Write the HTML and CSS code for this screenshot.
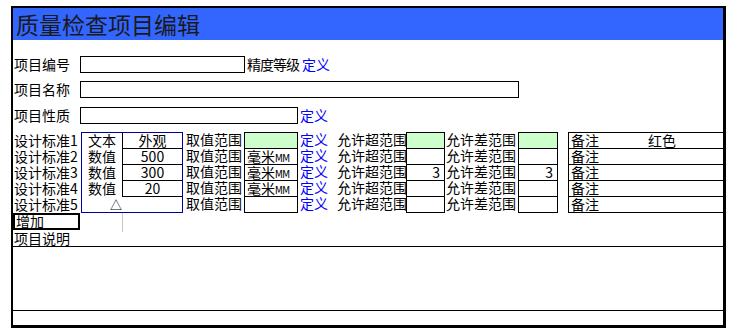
FILE: index.html
```html
<!DOCTYPE html>
<html lang="zh-CN">
<head>
  <meta charset="UTF-8" />
  <title>质量检查项目编辑</title>
  <link rel="stylesheet" href="styles.css">
</head>
<body>
  <div class="frame">
    <div class="title-bar">质量检查项目编辑</div>

    <div class="top-form">
      <div class="form-row">
        <span class="label">项目编号</span>
        <span class="field field-code"></span>
        <span class="precision">精度等级</span>
        <span class="define">定义</span>
      </div>
      <div class="form-row">
        <span class="label">项目名称</span>
        <span class="field field-name"></span>
      </div>
      <div class="form-row third">
        <span class="label">项目性质</span>
        <span class="field field-kind"></span>
        <span class="define">定义</span>
      </div>
    </div>

    <div class="standards">
      <div class="std-names">
        <div class="std-name">设计标准1</div>
        <div class="std-name">设计标准2</div>
        <div class="std-name">设计标准3</div>
        <div class="std-name">设计标准4</div>
        <div class="std-name">设计标准5</div>
      </div>

      <div class="type-box">
        <div class="type-row"><span class="type">文本</span><span class="type-val">外观</span></div>
        <div class="type-row"><span class="type">数值</span><span class="type-val">500</span></div>
        <div class="type-row"><span class="type">数值</span><span class="type-val">300</span></div>
        <div class="type-row"><span class="type">数值</span><span class="type-val">20</span></div>
        <div class="type-row last"><span class="type triangle">△</span><span class="type-val"></span></div>
      </div>

      <div class="std-rows">
        <div class="std-row">
          <span class="range-label">取值范围</span>
          <span class="box unit green"></span>
          <span class="define">定义</span>
          <span class="over-label">允许超范围</span>
          <span class="box num green"></span>
          <span class="diff-label">允许差范围</span>
          <span class="box num wide green"></span>
          <span class="note"><span class="note-label">备注</span>红色</span>
        </div>
        <div class="std-row">
          <span class="range-label">取值范围</span>
          <span class="box unit">毫米<span class="mm">MM</span></span>
          <span class="define">定义</span>
          <span class="over-label">允许超范围</span>
          <span class="box num"></span>
          <span class="diff-label">允许差范围</span>
          <span class="box num wide"></span>
          <span class="note"><span class="note-label">备注</span></span>
        </div>
        <div class="std-row">
          <span class="range-label">取值范围</span>
          <span class="box unit">毫米<span class="mm">MM</span></span>
          <span class="define">定义</span>
          <span class="over-label">允许超范围</span>
          <span class="box num">3</span>
          <span class="diff-label">允许差范围</span>
          <span class="box num wide">3</span>
          <span class="note"><span class="note-label">备注</span></span>
        </div>
        <div class="std-row">
          <span class="range-label">取值范围</span>
          <span class="box unit">毫米<span class="mm">MM</span></span>
          <span class="define">定义</span>
          <span class="over-label">允许超范围</span>
          <span class="box num"></span>
          <span class="diff-label">允许差范围</span>
          <span class="box num wide"></span>
          <span class="note"><span class="note-label">备注</span></span>
        </div>
        <div class="std-row">
          <span class="range-label">取值范围</span>
          <span class="box unit"></span>
          <span class="define">定义</span>
          <span class="over-label">允许超范围</span>
          <span class="box num"></span>
          <span class="diff-label">允许差范围</span>
          <span class="box num wide"></span>
          <span class="note"><span class="note-label">备注</span></span>
        </div>
      </div>
    </div>

    <div class="actions">
      <button class="add-btn">增加</button>
      <span class="stray-line"></span>
    </div>
    <div class="desc-label">项目说明</div>
    <div class="desc-box"></div>
  </div>
</body>
</html>
```

FILE: styles.css
```css
body {
  margin: 0;
  font-family: "Noto Sans CJK SC", "Noto Sans", sans-serif;
  font-size: 14px;
  color: #000;
  background-color: #fff;
}

.frame {
  margin: 6px 0 0 11px;
  width: 710px;
  height: 317px;
  border: 2px solid #000;
  border-right-width: 3px;
  border-bottom-width: 3px;
  overflow: hidden;
  display: flex;
  flex-direction: column;
}

.title-bar {
  height: 32px;
  line-height: 32px;
  padding-left: 3px;
  background-color: #3366ff;
  color: #1a1a1a;
  font-size: 23px;
  flex-shrink: 0;
}

/* top form */
.top-form {
  padding-top: 16px;
  display: flex;
  flex-direction: column;
  gap: 8px;
}

.form-row {
  display: flex;
  height: 17px;
  line-height: 17px;
}

.form-row.third { margin-top: 1px; }

.label {
  width: 66px;
  padding-left: 1px;
}

.field {
  box-sizing: border-box;
  height: 17px;
  border: 1px solid #000;
}

.field-code { width: 165px; }
.field-name { width: 439px; }
.field-kind { width: 218px; }

.precision {
  width: 53px;
  margin-left: 2px;
  letter-spacing: -1px;
  white-space: nowrap;
}

.define {
  width: 28px;
  margin-left: 2px;
  color: #0000ff;
  white-space: nowrap;
}

/* design standards */
.standards {
  margin-top: 8px;
  display: flex;
  height: 81px;
  flex-shrink: 0;
}

.std-names {
  width: 67px;
  padding-left: 1px;
}

.std-name {
  height: 16px;
  line-height: 16px;
  white-space: nowrap;
}

.type-box {
  box-sizing: border-box;
  width: 102px;
  height: 81px;
  border: 1px solid #0000a0;
}

.type-row {
  display: flex;
  height: 16px;
  line-height: 15px;
}

.type-row.last { height: 15px; }

.type {
  width: 40px;
  text-align: center;
}

.type.triangle {
  text-align: right;
  font-size: 12px;
}

.type-val {
  flex: 1;
  border-left: 1px solid #000;
  border-bottom: 1px solid #000;
  text-align: center;
}

.type-row.last .type-val { border: none; }

.std-rows {
  flex: 1;
  display: flex;
  flex-direction: column;
}

.std-row {
  display: flex;
  height: 16px;
  line-height: 15px;
  white-space: nowrap;
}

.std-row:last-child { height: 17px; }

.range-label {
  width: 58px;
  margin-left: 3px;
}

.over-label {
  width: 69px;
  margin-left: 9px;
}

.diff-label {
  width: 72px;
  margin-left: 1px;
}

.box {
  box-sizing: border-box;
  height: 16px;
  border: 1px solid #000;
  border-bottom: none;
}

.std-row:last-child .box,
.std-row:last-child .note {
  height: 17px;
  border-bottom: 1px solid #000;
}

.box.green { background-color: #ccffcc; }

.box.unit {
  width: 54px;
  padding-left: 2px;
}

.mm {
  font-family: "DejaVu Sans Condensed", "DejaVu Sans", sans-serif;
  font-size: 10px;
  letter-spacing: -0.5px;
}

.box.num {
  width: 39px;
  padding-right: 4px;
  text-align: right;
}

.box.num.wide { width: 40px; }

.note {
  box-sizing: border-box;
  flex: 1;
  height: 16px;
  margin-left: 10px;
  margin-right: -2px;
  padding-left: 2px;
  border: 1px solid #000;
  border-bottom: none;
}

.note-label {
  display: inline-block;
  width: 77px;
}

/* bottom part */
.actions {
  display: flex;
  height: 17px;
  flex-shrink: 0;
}

.add-btn {
  box-sizing: border-box;
  width: 67px;
  height: 17px;
  margin: 0;
  padding: 0 0 0 1px;
  border: 2px solid #000;
  background-color: #fff;
  font: inherit;
  line-height: 13px;
  text-align: left;
  color: #000;
}

.stray-line {
  width: 1px;
  height: 19px;
  margin-left: 42px;
  background-color: #c8c8c8;
  flex-shrink: 0;
}

.desc-label {
  height: 16px;
  line-height: 16px;
  padding-left: 1px;
  flex-shrink: 0;
}

.desc-box {
  box-sizing: border-box;
  height: 65px;
  border-top: 1px solid #000;
  border-bottom: 1px solid #000;
  flex-shrink: 0;
}
```
